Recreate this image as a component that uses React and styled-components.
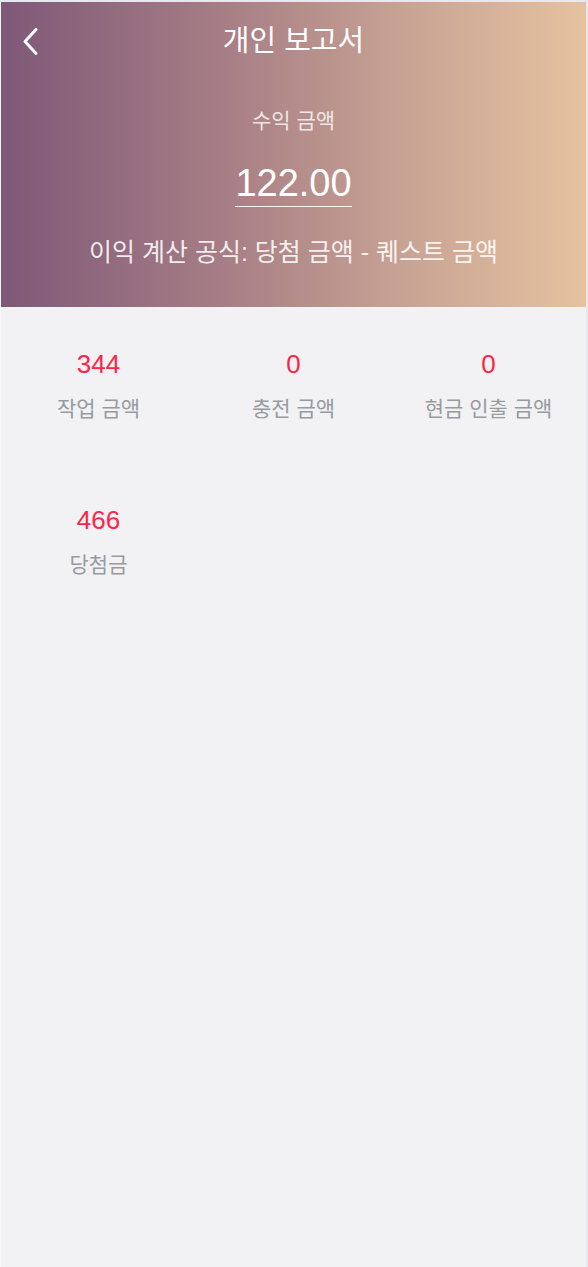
import React from "react";
import styled, { createGlobalStyle } from "styled-components";

const Global = createGlobalStyle`
  html, body { margin: 0; padding: 0; }
  body {
    background: #e6e9f0;
    font-family: "Liberation Sans", Arial, "Noto Sans CJK KR", sans-serif;
  }
`;

const Page = styled.div`
  margin: 2px 2px 0 0;
  border-left: 1px solid #f6f6f8;
  background: #f2f2f5;
  min-height: 1265px;
  display: flex;
  flex-direction: column;
`;

const Hero = styled.header`
  height: 305px;
  background: linear-gradient(90deg, #7e5878 0%, #a98086 40%, #c9a494 70%, #e6c2a0 100%);
  display: flex;
  flex-direction: column;
  align-items: center;
  color: #fff;
`;

const NavBar = styled.div`
  position: relative;
  align-self: stretch;
  height: 78px;
  display: flex;
  align-items: center;
  justify-content: center;
`;

const BackButton = styled.button`
  position: absolute;
  left: 20px;
  top: 25px;
  width: 20px;
  height: 30px;
  padding: 0;
  border: 0;
  background: none;
  cursor: pointer;
  display: block;
`;

const Title = styled.h1`
  margin: 0;
  font-size: 29px;
  line-height: 34px;
  font-weight: 400;
  color: #fff;
`;

const Caption = styled.div`
  margin-top: 28px;
  font-size: 21px;
  line-height: 26px;
  color: rgba(255, 255, 255, 0.8);
`;

const Amount = styled.div`
  margin-top: 27px;
  font-size: 38px;
  line-height: 44px;
  color: #fff;
  border-bottom: 1px solid rgba(255, 255, 255, 0.9);
  padding-bottom: 1px;
`;

const Formula = styled.div`
  margin-top: 30px;
  font-size: 25px;
  line-height: 30px;
  color: rgba(255, 255, 255, 0.88);
`;

const Grid = styled.div`
  display: grid;
  grid-template-columns: repeat(3, 1fr);
  row-gap: 83px;
  padding-top: 42px;
`;

const Cell = styled.div`
  display: flex;
  flex-direction: column;
  align-items: center;
`;

const Value = styled.div`
  font-size: 26px;
  line-height: 30px;
  color: #ff2447;
`;

const Label = styled.div`
  margin-top: 17px;
  font-size: 21px;
  line-height: 26px;
  color: #999aa0;
`;

const stats = [
  { value: "344", label: "작업 금액" },
  { value: "0", label: "충전 금액" },
  { value: "0", label: "현금 인출 금액" },
  { value: "466", label: "당첨금" },
];

export default function App() {
  return (
    <>
      <Global />
      <Page>
        <Hero>
          <NavBar>
            <BackButton aria-label="back">
              <svg width="20" height="30" viewBox="0 0 20 30" fill="none">
                <path d="M15 2.5 L4 14.5 L15 26.5" stroke="#fff" strokeWidth="3" strokeLinecap="round" strokeLinejoin="round" />
              </svg>
            </BackButton>
            <Title>개인 보고서</Title>
          </NavBar>
          <Caption>수익 금액</Caption>
          <Amount>122.00</Amount>
          <Formula>이익 계산 공식: 당첨 금액 - 퀘스트 금액</Formula>
        </Hero>
        <Grid>
          {stats.map((s, i) => (
            <Cell key={i}>
              <Value>{s.value}</Value>
              <Label>{s.label}</Label>
            </Cell>
          ))}
        </Grid>
      </Page>
    </>
  );
}
